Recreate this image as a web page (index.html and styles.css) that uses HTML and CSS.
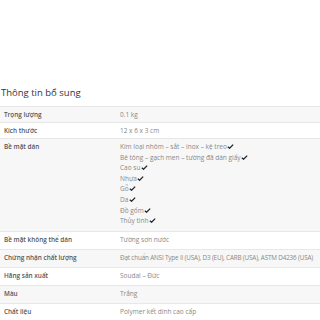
FILE: index.html
```html
<!DOCTYPE html>
<html lang="vi">
<head>
<meta charset="utf-8">
<link rel="stylesheet" href="styles.css">
</head>
<body>
<div class="wrap">
  <h2 class="title">Thông tin bổ sung</h2>
  <table class="attrs">
    <tr class="short"><th>Trọng lượng</th><td>0.1 kg</td></tr>
    <tr class="short"><th>Kích thước</th><td>12 x 6 x 3 cm</td></tr>
    <tr class="multi"><th>Bề mặt dán</th><td>
      <div class="ln">Kim loại nhôm – sắt – inox – kệ treo<svg class="ck" viewBox="0 0 8 6"><path d="M0.8 3.2 L2.9 5.1 L7.2 0.8"/></svg></div>
      <div class="ln">Bê tông – gạch men – tường đã dán giấy<svg class="ck" viewBox="0 0 8 6"><path d="M0.8 3.2 L2.9 5.1 L7.2 0.8"/></svg></div>
      <div class="ln">Cao su<svg class="ck" viewBox="0 0 8 6"><path d="M0.8 3.2 L2.9 5.1 L7.2 0.8"/></svg></div>
      <div class="ln">Nhựa<svg class="ck" viewBox="0 0 8 6"><path d="M0.8 3.2 L2.9 5.1 L7.2 0.8"/></svg></div>
      <div class="ln">Gỗ<svg class="ck" viewBox="0 0 8 6"><path d="M0.8 3.2 L2.9 5.1 L7.2 0.8"/></svg></div>
      <div class="ln">Da<svg class="ck" viewBox="0 0 8 6"><path d="M0.8 3.2 L2.9 5.1 L7.2 0.8"/></svg></div>
      <div class="ln">Đồ gốm<svg class="ck" viewBox="0 0 8 6"><path d="M0.8 3.2 L2.9 5.1 L7.2 0.8"/></svg></div>
      <div class="ln">Thủy tinh<svg class="ck" viewBox="0 0 8 6"><path d="M0.8 3.2 L2.9 5.1 L7.2 0.8"/></svg></div>
    </td></tr>
    <tr><th>Bề mặt không thể dán</th><td>Tường sơn nước</td></tr>
    <tr><th>Chứng nhận chất lượng</th><td class="long">Đạt chuẩn ANSI Type II (USA), D3 (EU), CARB (USA), ASTM D4236 (USA)</td></tr>
    <tr><th>Hãng sản xuất</th><td>Soudal – Đức</td></tr>
    <tr><th>Màu</th><td>Trắng</td></tr>
    <tr><th>Chất liệu</th><td>Polymer kết dính cao cấp</td></tr>
  </table>
</div>
</body>
</html>
```

FILE: styles.css
```css
html, body {
  margin: 0;
  padding: 0;
  background: #fff;
  font-family: "Open Sans", "Noto Sans", sans-serif;
  overflow: hidden;
}
.wrap {
  padding-top: 86px;
  width: 320px;
  overflow: hidden;
}
.title {
  margin: 0 0 6px 1px;
  font-size: 9.5px;
  line-height: 14px;
  font-weight: 400;
  color: #333;
}
.attrs {
  width: 320px;
  border-collapse: collapse;
  table-layout: fixed;
}
.attrs tr {
  border-top: 1px solid #e8e8e8;
}
.attrs tr:nth-child(odd) {
  background: #f7f7f7;
}
.attrs th {
  width: 112px;
  text-align: left;
  vertical-align: top;
  font-weight: 600;
  font-size: 6.4px;
  line-height: 8px;
  color: #555;
  padding: 4.5px 4px 4.5px;
}
.attrs td {
  text-align: left;
  vertical-align: top;
  font-size: 6.5px;
  line-height: 8px;
  color: #888;
  padding: 4.5px 0 4.5px 0;
  white-space: nowrap;
}
.attrs td.long {
  font-size: 6.3px;
  letter-spacing: -0.15px;
}
.attrs tr.short th, .attrs tr.short td {
  padding-top: 4px;
  padding-bottom: 3px;
}
.attrs tr.multi th {
  padding-top: 4px;
}
.attrs tr.multi td {
  padding-top: 3px;
  padding-bottom: 4px;
}
.ln {
  line-height: 10.6px;
}
.ck {
  width: 7px;
  height: 5px;
  margin-left: 0.5px;
  vertical-align: 0;
  fill: none;
  stroke: #222;
  stroke-width: 1.5;
}
```
